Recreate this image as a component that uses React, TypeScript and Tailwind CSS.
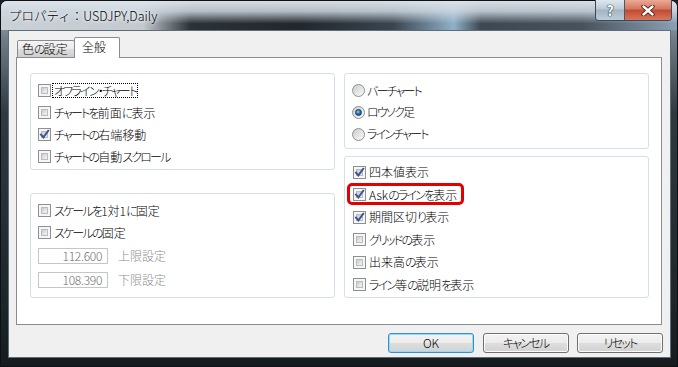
import React from "react";

function T({ s }: { s: string }) {
  const parts = s.match(/[\u3040-\u30ff]+|[^\u3040-\u30ff]+/g) || [];
  return (
    <>
      {parts.map((p, i) =>
        /[\u3040-\u30ff]/.test(p) ? (
          <span key={i} className="tracking-[-1.8px]">
            {p}
          </span>
        ) : (
          <span key={i}>{p}</span>
        )
      )}
    </>
  );
}

function CheckBox({ checked }: { checked?: boolean }) {
  return (
    <div className="relative w-[13px] h-[13px] shrink-0 border border-[#8e8f8f] bg-[#f6f6f6] p-[2px]">
      <div className="w-full h-full border border-[#b9bcc1] bg-[linear-gradient(135deg,#c6cacf_0%,#e2e4e7_55%,#f4f4f5_100%)]" />
      {checked && (
        <svg className="absolute left-0 top-0" width="11" height="11" viewBox="0 0 11 11">
          <path d="M2 5.6 L4.4 8.4 L9.2 1.8" fill="none" stroke="#3f5391" strokeWidth="2" strokeLinecap="square" />
        </svg>
      )}
    </div>
  );
}

function Radio({ checked }: { checked?: boolean }) {
  return (
    <div className="w-[13px] h-[13px] shrink-0 rounded-full border border-[#8e8f8f] bg-[linear-gradient(135deg,#c9ccd0_0%,#e6e7e9_55%,#fbfbfb_100%)] flex items-center justify-center">
      {checked ? (
        <div className="w-[7px] h-[7px] rounded-full border border-[#123a5e] bg-[radial-gradient(circle_at_40%_35%,#9ad8f7_0%,#2d74ae_45%,#0e3d68_100%)]" />
      ) : (
        <div className="w-[7px] h-[7px] rounded-full bg-[linear-gradient(135deg,#d2d4d7,#f1f1f2)]" />
      )}
    </div>
  );
}

function CheckRow({
  label,
  checked,
  focus,
}: {
  label: string;
  checked?: boolean;
  focus?: boolean;
}) {
  return (
    <div className="flex items-center h-[22px]">
      <CheckBox checked={checked} />
      <span
        className={
          focus
            ? "ml-[1px] px-[1px] leading-[13px] border border-dotted border-black whitespace-nowrap"
            : "ml-[1px] px-[1px] leading-[13px] border border-transparent whitespace-nowrap"
        }
      >
        <T s={label} />
      </span>
    </div>
  );
}

function RadioRow({ label, checked }: { label: string; checked?: boolean }) {
  return (
    <div className="flex items-center h-[21.67px]">
      <Radio checked={checked} />
      <span className="ml-[2px] whitespace-nowrap">
        <T s={label} />
      </span>
    </div>
  );
}

function RightCheckRow({ label, checked }: { label: string; checked?: boolean }) {
  return (
    <div className="flex items-center h-[22.5px]">
      <CheckBox checked={checked} />
      <span className="ml-[3px] whitespace-nowrap">
        <T s={label} />
      </span>
    </div>
  );
}

function Button({ label, def }: { label: string; def?: boolean }) {
  return (
    <div
      className={
        def
          ? "w-[86px] h-[20px] rounded-[3px] border border-[#3c8fc6] shadow-[inset_0_0_0_1px_#8fdcfb] bg-[linear-gradient(to_bottom,#f3f3f3_0%,#ececec_50%,#dedede_50%,#d2d2d2_100%)] flex items-center justify-center leading-none"
          : "w-[86px] h-[20px] rounded-[3px] border border-[#707070] shadow-[inset_0_0_0_1px_#fbfbfb] bg-[linear-gradient(to_bottom,#f3f3f3_0%,#ececec_50%,#dedede_50%,#d2d2d2_100%)] flex items-center justify-center leading-none"
      }
    >
      <T s={label} />
    </div>
  );
}

export default function App() {
  return (
    <div className="w-[678px] h-[367px] overflow-hidden bg-[#1a2024]">
      <div className="w-[678px] h-[367px] flex flex-col rounded-t-[7px] border border-[#0d1114] bg-[linear-gradient(to_bottom,#a9b4bd_0px,#6e7b86_40px,#2f3a41_110px,#1e262b_300px,#151b1f_100%)] font-['Noto_Sans_CJK_JP',sans-serif] font-light text-[12px] text-black [font-feature-settings:'palt']">
        {/* title bar */}
        <div className="h-[29px] shrink-0 flex items-start justify-between rounded-t-[6px] bg-[linear-gradient(to_bottom,rgba(222,228,234,0.96)_0%,rgba(206,216,225,0.85)_35%,rgba(200,212,222,0)_78%),linear-gradient(to_right,#c9d0d6_0%,#c2c9cf_21%,#2c3238_28%,#22272d_44%,#394550_58%,#8fb0c8_67%,#3d4852_71%,#47525d_86%,#8aa0b4_100%)]">
          <div className="pl-[8px] pt-[6px] leading-[17px] text-[12.5px] whitespace-nowrap [font-feature-settings:normal] [text-shadow:0_0_6px_#fff,0_0_3px_#fff]">
            プロパティ：USDJPY,Daily
          </div>
          <div className="flex mr-[5px] -mt-[1px] h-[21px] rounded-b-[4px] border border-t-0 border-[#3b4a56] overflow-hidden">
            <div className="w-[29px] h-full border-r border-[#4a5966] bg-[linear-gradient(to_bottom,#dfe7ee_0%,#bccad6_45%,#a2b4c4_50%,#bccdda_100%)] flex items-center justify-center text-[14px] font-bold text-white leading-none [text-shadow:0_0_1px_#2c3640,0_0_1px_#2c3640,0_0_1px_#2c3640]">
              ?
            </div>
            <div className="w-[46px] h-full bg-[linear-gradient(to_bottom,#eaa997_0%,#d5765f_45%,#c24a2f_50%,#d8765c_100%)] flex items-center justify-center">
              <svg width="14" height="11" viewBox="0 0 14 11">
                <path d="M2.5 1.5 L11.5 9.5 M11.5 1.5 L2.5 9.5" stroke="#4a1a12" strokeWidth="4.2" strokeLinecap="round" />
                <path d="M2.5 1.5 L11.5 9.5 M11.5 1.5 L2.5 9.5" stroke="#ffffff" strokeWidth="2.4" strokeLinecap="round" />
              </svg>
            </div>
          </div>
        </div>

        {/* client area */}
        <div className="ml-[7px] mr-[6px] h-[328px] shrink-0 border border-[#5f6d78] bg-[#f0f0f0] flex flex-col">
          <div className="pt-[6px] pl-[7px] pr-[8px]">
            {/* tabs */}
            <div className="flex items-end h-[20px] pl-[1px]">
              <div className="h-[17px] w-[58px] border-l border-t border-r border-[#898c95] rounded-t-[2px] bg-[linear-gradient(to_bottom,#f3f3f3_0%,#ebebeb_50%,#dddddd_50%,#cfcfcf_100%)] flex items-center pl-[4px] leading-none whitespace-nowrap">
                <T s="色の設定" />
              </div>
              <div className="h-[21px] w-[46px] -ml-[1px] -mb-[1px] relative z-10 bg-white border-l border-t border-r border-[#898c95] rounded-t-[2px] flex items-center pl-[7px] pb-[3px] leading-none whitespace-nowrap">
                全般
              </div>
            </div>

            {/* panel */}
            <div className="h-[268px] border border-[#898c95] bg-white pl-[13px] pt-[15px] pr-[12px] flex gap-[9px]">
              {/* left column */}
              <div className="w-[305px] flex flex-col">
                <div className="h-[97px] rounded-[3px] border border-[#d5dfe5] pl-[7px] pt-[5px]">
                  <CheckRow label="オフライン・チャート" focus />
                  <CheckRow label="チャートを前面に表示" />
                  <CheckRow label="チャートの右端移動" checked />
                  <CheckRow label="チャートの自動スクロール" />
                </div>
                <div className="mt-[23px] h-[105px] rounded-[3px] border border-[#d5dfe5] pl-[7px] pt-[5px]">
                  <CheckRow label="スケールを1対1に固定" />
                  <CheckRow label="スケールの固定" />
                  <div className="mt-[4px] flex items-center">
                    <div className="w-[70px] h-[16px] border border-[#c3c6cb] bg-white text-right pr-[5px] leading-[14px] text-[#6d6d6d] tracking-[-0.3px]">
                      112.600
                    </div>
                    <span className="ml-[10px] text-[#8c8c8c]">上限設定</span>
                  </div>
                  <div className="mt-[6px] flex items-center">
                    <div className="w-[70px] h-[16px] border border-[#c3c6cb] bg-white text-right pr-[5px] leading-[14px] text-[#6d6d6d] tracking-[-0.3px]">
                      108.390
                    </div>
                    <span className="ml-[10px] text-[#8c8c8c]">下限設定</span>
                  </div>
                </div>
              </div>

              {/* right column */}
              <div className="w-[305px] flex flex-col">
                <div className="h-[76px] rounded-[3px] border border-[#d5dfe5] pl-[7px] pt-[6px]">
                  <RadioRow label="バーチャート" />
                  <RadioRow label="ロウソク足" checked />
                  <RadioRow label="ラインチャート" />
                </div>
                <div className="mt-[7px] h-[142px] rounded-[3px] border border-[#d5dfe5] pl-[8px] pt-[4px]">
                  <RightCheckRow label="四本値表示" checked />
                  <div className="relative">
                    <RightCheckRow label="Askのラインを表示" checked />
                    <div className="absolute -left-[6px] -top-[0.5px] w-[117px] h-[22px] border-[3px] border-[#e30000] rounded-[5px]" />
                  </div>
                  <RightCheckRow label="期間区切り表示" checked />
                  <RightCheckRow label="グリッドの表示" />
                  <RightCheckRow label="出来高の表示" />
                  <RightCheckRow label="ライン等の説明を表示" />
                </div>
              </div>
            </div>
          </div>

          {/* buttons */}
          <div className="flex justify-end gap-[8.5px] pr-[7px] mt-[8px]">
            <Button label="OK" def />
            <Button label="キャンセル" />
            <Button label="リセット" />
          </div>
        </div>
      </div>
    </div>
  );
}
